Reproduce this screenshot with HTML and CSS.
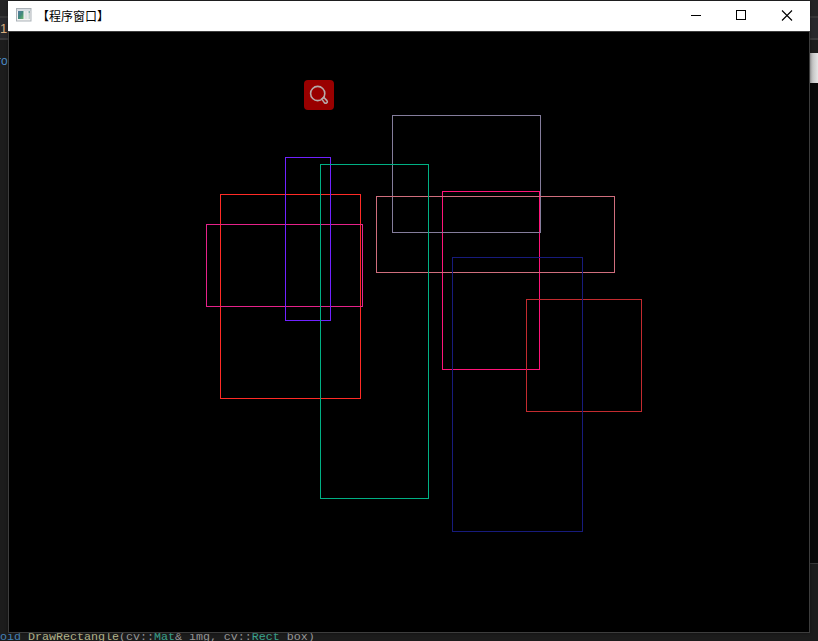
FILE: index.html
```html
<!DOCTYPE html>
<html lang="zh-CN">
<head>
<meta charset="utf-8">
<title>程序窗口</title>
<link rel="stylesheet" href="styles.css">
</head>
<body>
<main class="desktop">
  <div class="editor">
    <div class="editor-top"></div>
    <div class="editor-tabs"><span class="tab-text">1</span></div>
    <div class="editor-body">
      <span class="return-type">ro</span>
      <div class="side-panel"><div class="side-light"></div><div class="side-dark"></div></div>
    </div>
    <div class="code-line"><span class="kw">void</span> <span class="fn">DrawRectangle</span>(cv::<span class="type">Mat</span>&amp; img, cv::<span class="type">Rect</span> box)</div>
  </div>
  <section class="window">
    <header class="titlebar">
      <svg class="app-icon" width="16" height="14" viewBox="0 0 16 14">
        <defs><linearGradient id="screen" x1="0" y1="0" x2="1" y2="1"><stop offset="0" stop-color="#5678a4"/><stop offset=".5" stop-color="#40887c"/><stop offset="1" stop-color="#69b56a"/></linearGradient></defs>
        <path fill="#abb2b8" d="M0 0h15.500v13.500H0z"/>
        <path fill="#d7dde2" d="M1 1h13.500v2H1z"/>
        <path fill="#f3f3f3" d="M1 3h13.500v9.500H1z"/>
        <path fill="url(#screen)" d="M2 3h5.500v8H2z"/>
        <path fill="#dfe2e4" d="M8.500 3h3v8h-3z"/>
        <path fill="#88b2ae" d="M12.500 3H14v2h-1.500z"/>
        <path fill="#c3d2d0" d="M12.500 5H14v6h-1.500z"/>
      </svg>
      <h1 class="title">【程序窗口】</h1>
      <div class="controls">
        <svg width="46" height="30"><path d="M19 14.500h10"/></svg>
        <svg width="46" height="30"><path d="M18.500 9.500h9v9h-9z"/></svg>
        <svg width="46" height="30"><path class="cross" d="M18 9.500l10 10M28 9.500l-10 10"/></svg>
      </div>
    </header>
    <svg class="canvas" width="800" height="600" viewBox="9 32 800 600">
      <g class="boxes">
        <rect x="220.500" y="194.500" width="140" height="204" stroke="#ff2b26"/>
        <rect x="206.500" y="224.500" width="156" height="82" stroke="#e6228a"/>
        <rect x="285.500" y="157.500" width="45" height="163" stroke="#7022ff"/>
        <rect x="442.500" y="191.500" width="97" height="178" stroke="#ff1479"/>
        <rect x="392.500" y="115.500" width="148" height="117" stroke="#847d9c"/>
        <rect x="376.500" y="196.500" width="238" height="76" stroke="#cf6e7d"/>
        <rect x="526.500" y="299.500" width="115" height="112" stroke="#c32b2f"/>
        <rect x="452.500" y="257.500" width="130" height="274" stroke="#171b7c"/>
        <rect x="320.500" y="164.500" width="108" height="334" stroke="#00b084"/>
      </g>
      <rect x="304" y="80" width="30" height="30" rx="4" fill="#990000"/>
      <g class="lens">
        <circle cx="317.700" cy="93.500" r="7.100"/>
        <path d="M321.700 99l2-1.700 3.200 3.300q1 1.500-.2 2.300-1.200.9-2.400-.3z"/>
      </g>
    </svg>
  </section>
</main>
</body>
</html>
```
FILE: styles.css
```css
* {
  box-sizing: border-box;
}

body {
  margin: 0;
  background: #1e1e1e;
}

.desktop {
  position: relative;
  width: 818px;
  height: 641px;
  overflow: hidden;
}

.editor {
  display: flex;
  flex-direction: column;
  height: 641px;
  background: #1c1c1c;
}

.editor-top {
  flex: none;
  height: 16px;
  background: #252526;
}

.editor-tabs {
  flex: none;
  height: 24px;
  border-top: 2px solid #363637;
  border-bottom: 2px solid #3a3a3c;
  background: #28282c;
}

.tab-text {
  display: block;
  font: 13px/22px "Liberation Sans", sans-serif;
  color: #d8ad7d;
}

.editor-body {
  display: flex;
  flex: none;
  justify-content: space-between;
  height: 590px;
}

.return-type {
  margin: 12px 0 0 -3px;
  font: 12px/18px "Liberation Sans", sans-serif;
  color: #4c8ec9;
}

.side-panel {
  width: 8px;
  padding-top: 13px;
}

.side-light {
  height: 30px;
  background: linear-gradient(90deg, #b5b5b5, #e6e6e6);
}

.side-dark {
  height: 481px;
  border-bottom: 1px solid #383838;
  background: #090909;
}

.code-line {
  flex: none;
  height: 14px;
  margin-left: -7px;
  font: 11.667px/14px "Liberation Mono", monospace;
  white-space: pre;
  color: #999;
}

.kw {
  color: #4582b5;
}

.fn {
  color: #b5b58b;
}

.type {
  color: #3ba58f;
}

.window {
  position: absolute;
  left: 8px;
  top: 1px;
  width: 802px;
  height: 632px;
  border: 1px solid #3d3d3d;
  border-top: 0;
  background: #000;
  box-shadow: 0 0 3px rgba(0, 0, 0, .45);
}

.titlebar {
  display: flex;
  align-items: center;
  height: 31px;
  margin: 0 -1px;
  padding-left: 8px;
  border-bottom: 1px solid #3d3d3d;
  background: #fff;
}

.app-icon {
  margin-bottom: 2px;
}

.title {
  margin: 0 0 0 5px;
  font: 400 12px/30px "Noto Sans CJK SC", sans-serif;
  color: #000;
}

.controls {
  display: flex;
  margin-left: auto;
}

.controls path {
  fill: none;
  stroke: #000;
  shape-rendering: crispEdges;
}

.controls .cross {
  stroke-width: 1.1;
  shape-rendering: auto;
}

.canvas {
  display: block;
}

.boxes {
  fill: none;
  stroke-width: 1;
  shape-rendering: crispEdges;
}

.lens {
  fill: none;
  stroke: #b7a9a9;
  stroke-width: 1.6;
}
```
